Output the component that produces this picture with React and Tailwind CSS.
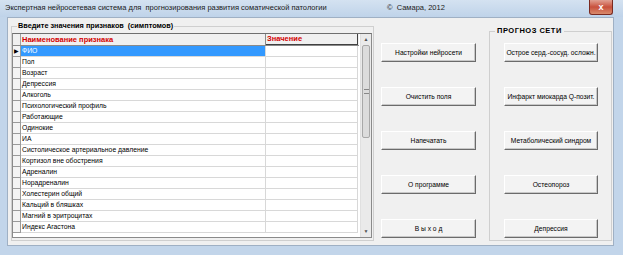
import React from "react";

const rows = [
  "ФИО",
  "Пол",
  "Возраст",
  "Депрессия",
  "Алкоголь",
  "Психологический профиль",
  "Работающие",
  "Одинокие",
  "ИА",
  "Систолическое артериальное давление",
  "Кортизол вне обострения",
  "Адреналин",
  "Норадреналин",
  "Холестерин общий",
  "Кальций в бляшках",
  "Магний в эритроцитах",
  "Индекс Агастона",
];

const leftButtons = ["Настройки нейросети", "Очистить поля", "Напечатать", "О программе", "В ы х о д"];
const rightButtons = [
  "Острое серд.-сосуд. осложн.",
  "Инфаркт миокарда Q-позит.",
  "Метаболический синдром",
  "Остеопороз",
  "Депрессия",
];

function WinButton({ label, w }) {
  return (
    <button
      className={`${w} h-[19px] shrink-0 bg-[#f3f3f3] border border-t-white border-l-white border-r-[#6b6b6b] border-b-[#6b6b6b] shadow-[inset_-1px_-1px_0_#c8c8c8] text-[6.7px] leading-[17px] text-black whitespace-pre`}
    >
      {label}
    </button>
  );
}

function Grid() {
  return (
    <div className="flex h-[205px] border border-[#8a8a8a] border-t-[#6f6f6f] bg-white">
      <div className="flex flex-col w-[346px]">
        {/* header */}
        <div className="flex h-[12px] bg-[#f0f0f0] border-b border-[#8a8a8a]">
          <div className="w-[8px] border-r border-[#a0a0a0]" />
          <div className="w-[245px] border-r border-[#8a8a8a] pl-[1px] text-[7.5px] leading-[11px] font-bold text-[#d40000]">
            Наименование признака
          </div>
          <div className="w-[92px] border-r border-b border-[#404040] pl-[1px] text-[7.5px] leading-[10px] font-bold text-[#d40000]">
            Значение
          </div>
        </div>
        {rows.map((r, i) => (
          <div key={r} className="flex h-[11px]">
            <div className="w-[8px] bg-[#f4f4f4] border-r border-b border-[#9a9a9a] flex items-center justify-center text-[6px] leading-none text-black">
              {i === 0 ? "▶" : ""}
            </div>
            <div
              className={`w-[245px] border-r border-b border-[#d8d8d8] pl-[1px] text-[6.8px] leading-[10px] ${
                i === 0 ? "bg-[#3399ff] text-white" : "text-black"
              }`}
            >
              {r}
            </div>
            <div className="w-[92px] border-r border-b border-[#d8d8d8]" />
          </div>
        ))}
      </div>
      {/* scrollbar */}
      <div className="ml-[1px] w-[11px] flex flex-col bg-[#eaeaea] border-l border-[#e0e0e0]">
        <div className="h-[11px] flex items-center justify-center text-[5px] leading-none text-[#505050]">▲</div>
        <div className="mx-[1px] h-[93px] bg-[#dcdcdc] border border-[#a8a8a8] rounded-[2px] flex items-center justify-center">
          <div className="w-[5px] h-[5px] border-y border-[#888]" />
        </div>
        <div className="flex-1" />
        <div className="h-[11px] flex items-center justify-center text-[5px] leading-none text-[#505050]">▼</div>
      </div>
    </div>
  );
}

export default function App() {
  return (
    <div
      className="w-[623px] h-[255px] flex flex-col bg-[#c2d5ea] overflow-hidden"
      style={{ fontFamily: '"Liberation Sans", Arial, sans-serif' }}
    >
      {/* title bar */}
      <div className="h-[17px] flex items-start bg-gradient-to-b from-[#d4e2f1] to-[#bfd3e9]">
        <span className="ml-[5px] w-[382px] text-[7.5px] leading-[16px] text-[#1a1a1a] whitespace-pre">
          Экспертная нейросетевая система для  прогнозирования развития соматической патологии
        </span>
        <span className="text-[7.5px] leading-[16px] text-[#1a1a1a] whitespace-pre">©  Самара, 2012</span>
        <div className="ml-auto mr-[10px] w-[24px] h-[15px] rounded-b-[3px] border border-t-0 border-[#7a2a20] bg-gradient-to-b from-[#e0a092] via-[#c8503c] to-[#d88a6c] flex items-center justify-center text-white text-[9px] font-bold leading-none">
          x
        </div>
      </div>

      {/* body */}
      <div className="flex h-[229px]">
        <div className="w-[7px]" />
        <div className="w-[607px] bg-[#f0f0f0] border border-[#9fb0c4] flex items-start">
          {/* left group */}
          <fieldset className="ml-[3px] mt-[3px] w-[362px] h-[220px] border border-[#cfcfcf] p-0 pr-[1px]">
            <legend className="ml-[5px] px-[1px] text-[7.3px] leading-[10px] font-bold text-black whitespace-pre">
              Введите значения признаков  (симптомов)
            </legend>
            <div className="mt-[2px]">
              <Grid />
            </div>
          </fieldset>

          {/* buttons */}
          <div className="ml-[7px] mt-[25px] flex flex-col gap-[25px]">
            {leftButtons.map((b) => (
              <WinButton key={b} label={b} w="w-[95px]" />
            ))}
          </div>

          {/* right group */}
          <fieldset className="ml-[13px] mt-[8px] w-[123px] h-[215px] border border-[#cfcfcf] p-0">
            <legend className="ml-[5px] px-[2px] text-[7.5px] leading-[10px] font-bold text-black tracking-[0.5px]">
              ПРОГНОЗ СЕТИ
            </legend>
            <div className="mt-[7px] ml-[14px] flex flex-col gap-[25px]">
              {rightButtons.map((b) => (
                <WinButton key={b} label={b} w="w-[94px]" />
              ))}
            </div>
          </fieldset>
        </div>
        <div className="w-[9px]" />
      </div>
      <div className="flex-1" />
    </div>
  );
}
